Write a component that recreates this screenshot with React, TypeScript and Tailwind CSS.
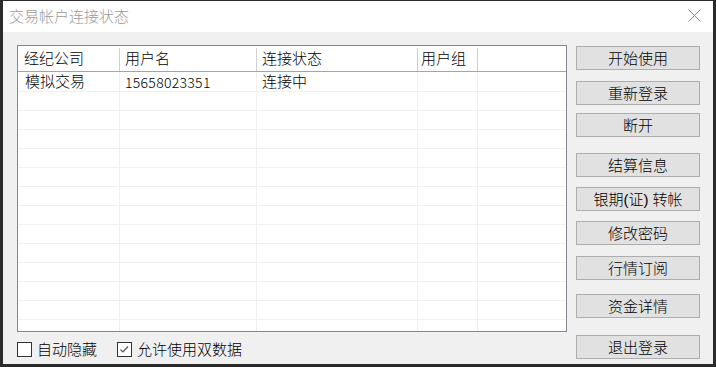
import React from 'react';

const buttons: { label: React.ReactNode; mt: string }[] = [
  { label: '开始使用', mt: 'mt-0' },
  { label: '重新登录', mt: 'mt-[11px]' },
  { label: '断开', mt: 'mt-[8px]' },
  { label: '结算信息', mt: 'mt-[16px]' },
  {
    label: (
      <>
        银期(证)<span className="ml-[4px]">转帐</span>
      </>
    ),
    mt: 'mt-[10px]',
  },
  { label: '修改密码', mt: 'mt-[10px]' },
  { label: '行情订阅', mt: 'mt-[11px]' },
  { label: '资金详情', mt: 'mt-[14px]' },
  { label: '退出登录', mt: 'mt-[17px]' },
];

const rows = Array.from({ length: 14 }, (_, i) => i);

function Checkbox({ checked }: { checked?: boolean }) {
  return (
    <div className="w-[15px] h-[15px] border border-[#333333] bg-white flex items-center justify-center">
      {checked && (
        <svg width="13" height="13" viewBox="0 0 13 13">
          <polyline points="2.5,6.5 5,9 10,3.5" fill="none" stroke="#555555" strokeWidth="1.2" />
        </svg>
      )}
    </div>
  );
}

export default function App() {
  return (
    <div className="w-[716px] h-[367px] bg-[#2b2b2b] pt-px px-[3px] pb-[3px] flex flex-col font-['Liberation_Sans','Noto_Sans_CJK_SC',sans-serif] font-light text-black">
      {/* title bar */}
      <div className="h-[31px] bg-white flex items-start justify-between pl-[6px] pr-[12px]">
        <span className="text-[15px] leading-none text-[#9a9a9a] mt-[8px]">交易帐户连接状态</span>
        <svg width="13" height="13" viewBox="0 0 13 13" className="mt-[8px]">
          <line x1="0.5" y1="0.5" x2="12.5" y2="12.5" stroke="#8a8a8a" strokeWidth="1" />
          <line x1="12.5" y1="0.5" x2="0.5" y2="12.5" stroke="#8a8a8a" strokeWidth="1" />
        </svg>
      </div>

      {/* client area */}
      <div className="flex-1 bg-[#f0f0f0] flex">
        <div className="pl-[14px] pt-[13px] flex flex-col">
          <div className="w-[550px] h-[287px] border border-[#828790] bg-white overflow-hidden flex flex-col">
            {/* header */}
            <div className="h-[26px] shrink-0 flex items-start border-b border-[#a5a5a5] text-[15px] leading-none">
              <div className="w-[101px] h-full flex items-center pl-[6px]">经纪公司</div>
              <div className="w-px h-[23px] mt-[2px] bg-[#cfcfcf]" />
              <div className="w-[136px] h-full flex items-center pl-[5px]">用户名</div>
              <div className="w-px h-[23px] mt-[2px] bg-[#cfcfcf]" />
              <div className="w-[160px] h-full flex items-center pl-[5px]">连接状态</div>
              <div className="w-px h-[23px] mt-[2px] bg-[#cfcfcf]" />
              <div className="w-[59px] h-full flex items-center pl-[3px]">用户组</div>
              <div className="w-px h-[23px] mt-[2px] bg-[#cfcfcf]" />
            </div>

            {/* rows */}
            {rows.map((i) => (
              <div
                key={i}
                className={`${i === 0 ? 'h-[20px]' : 'h-[19px]'} shrink-0 flex border-b border-[#f0f0f0] text-[15px] leading-none`}
              >
                <div className="w-[102px] border-r border-[#f0f0f0] flex items-center pl-[7px]">
                  {i === 0 && '模拟交易'}
                </div>
                <div className="w-[137px] border-r border-[#f0f0f0] flex items-center pl-[5px] text-[14px] font-['Noto_Sans_CJK_SC',sans-serif] tracking-[0.3px]">
                  {i === 0 && '15658023351'}
                </div>
                <div className="w-[161px] border-r border-[#f0f0f0] flex items-center pl-[5px]">
                  {i === 0 && '连接中'}
                </div>
                <div className="w-[60px] border-r border-[#f0f0f0]" />
                <div className="flex-1" />
              </div>
            ))}
          </div>

          {/* options */}
          <div className="mt-[10px] flex items-center text-[15px] leading-none">
            <Checkbox />
            <span className="ml-[5px]">自动隐藏</span>
            <div className="ml-[20px]">
              <Checkbox checked />
            </div>
            <span className="ml-[5px]">允许使用双数据</span>
          </div>
        </div>

        {/* buttons */}
        <div className="ml-[9px] pt-[14px] w-[124px] flex flex-col">
          {buttons.map((b, i) => (
            <div
              key={i}
              className={`${b.mt} h-[24px] bg-[#e1e1e1] border border-[#adadad] flex items-center justify-center text-[15px] leading-none`}
            >
              {b.label}
            </div>
          ))}
        </div>
      </div>
    </div>
  );
}
